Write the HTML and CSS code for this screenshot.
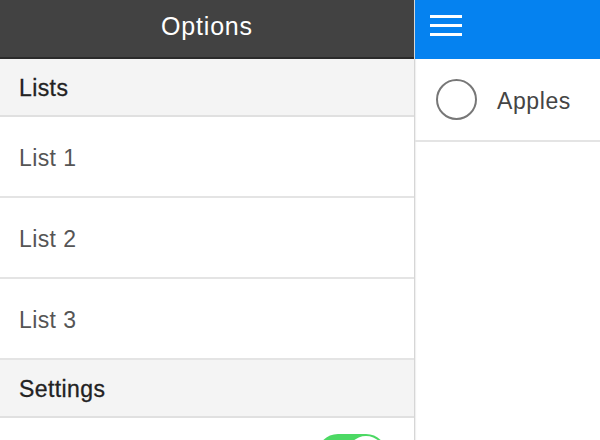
FILE: index.html
```html
<!DOCTYPE html>
<html>
<head>
<meta charset="utf-8">
<link rel="stylesheet" href="styles.css">
</head>
<body>
<div class="app">
  <aside class="menu">
    <header class="menu-header">Options</header>
    <div class="section">Lists</div>
    <div class="item">List 1</div>
    <div class="item">List 2</div>
    <div class="item">List 3</div>
    <div class="section">Settings</div>
    <div class="item toggle-row">
      <span class="toggle"><span class="knob"></span></span>
    </div>
  </aside>
  <main class="content">
    <header class="content-header">
      <svg class="burger" width="32" height="22" viewBox="0 0 32 22">
        <rect x="0" y="0" width="32" height="3" fill="#fff"/>
        <rect x="0" y="9" width="32" height="3" fill="#fff"/>
        <rect x="0" y="18" width="32" height="3" fill="#fff"/>
      </svg>
    </header>
    <div class="todo">
      <span class="check"></span>
      <span class="todo-text">Apples</span>
    </div>
  </main>
</div>
</body>
</html>
```

FILE: styles.css
```css
html, body {
  margin: 0;
  padding: 0;
}
body {
  width: 600px;
  height: 440px;
  overflow: hidden;
  font-family: "Liberation Sans", Arial, sans-serif;
  background: #fff;
}
.app {
  display: flex;
  width: 600px;
  height: 440px;
  overflow: hidden;
}
.menu {
  width: 414px;
  flex: none;
  display: flex;
  flex-direction: column;
  border-right: 1px solid #d6d6d6;
  box-shadow: 1px 0 1px rgba(0,0,0,0.06);
  overflow: hidden;
}
.menu-header {
  box-sizing: border-box;
  height: 59px;
  flex: none;
  background: #424242;
  border-bottom: 2px solid #2a2a2a;
  color: #fff;
  font-size: 25px;
  letter-spacing: 0.8px;
  display: flex;
  align-items: center;
  justify-content: center;
  padding-bottom: 4px;
}
.section {
  box-sizing: border-box;
  height: 58px;
  flex: none;
  background: #f4f4f4;
  border-bottom: 2px solid #e0e0e0;
  color: #222;
  font-size: 23px;
  letter-spacing: 0.4px;
  display: flex;
  align-items: center;
  padding: 3px 0 0 19px;
  -webkit-text-stroke: 0.3px #222;
}
.item {
  box-sizing: border-box;
  height: 81px;
  flex: none;
  border-bottom: 2px solid #e4e4e4;
  color: #555;
  font-size: 23px;
  letter-spacing: 0.4px;
  display: flex;
  align-items: center;
  padding: 3px 0 0 19px;
}
.toggle-row {
  border-bottom: none;
  align-items: flex-start;
  padding-top: 16px;
  padding-left: 317px;
}
.toggle {
  display: flex;
  justify-content: flex-end;
  align-items: center;
  box-sizing: border-box;
  width: 70px;
  height: 42px;
  border-radius: 21px;
  background: #4cd964;
  padding: 2px;
}
.knob {
  width: 38px;
  height: 38px;
  border-radius: 50%;
  background: #fff;
  box-shadow: 0 2px 3px rgba(0,0,0,0.2);
}
.content {
  flex: 1;
  display: flex;
  flex-direction: column;
}
.content-header {
  box-sizing: border-box;
  height: 59px;
  flex: none;
  background: #0582f0;
  display: flex;
  align-items: flex-start;
  padding: 15px 0 0 15px;
}
.burger {
  display: block;
}
.todo {
  box-sizing: border-box;
  height: 83px;
  flex: none;
  border-bottom: 2px solid #e4e4e4;
  display: flex;
  align-items: center;
  padding-left: 21px;
}
.check {
  box-sizing: border-box;
  width: 41px;
  height: 41px;
  border-radius: 50%;
  border: 2px solid #777;
  flex: none;
}
.todo-text {
  margin-left: 20px;
  padding-top: 3px;
  font-size: 23px;
  letter-spacing: 0.6px;
  color: #444;
}
```
